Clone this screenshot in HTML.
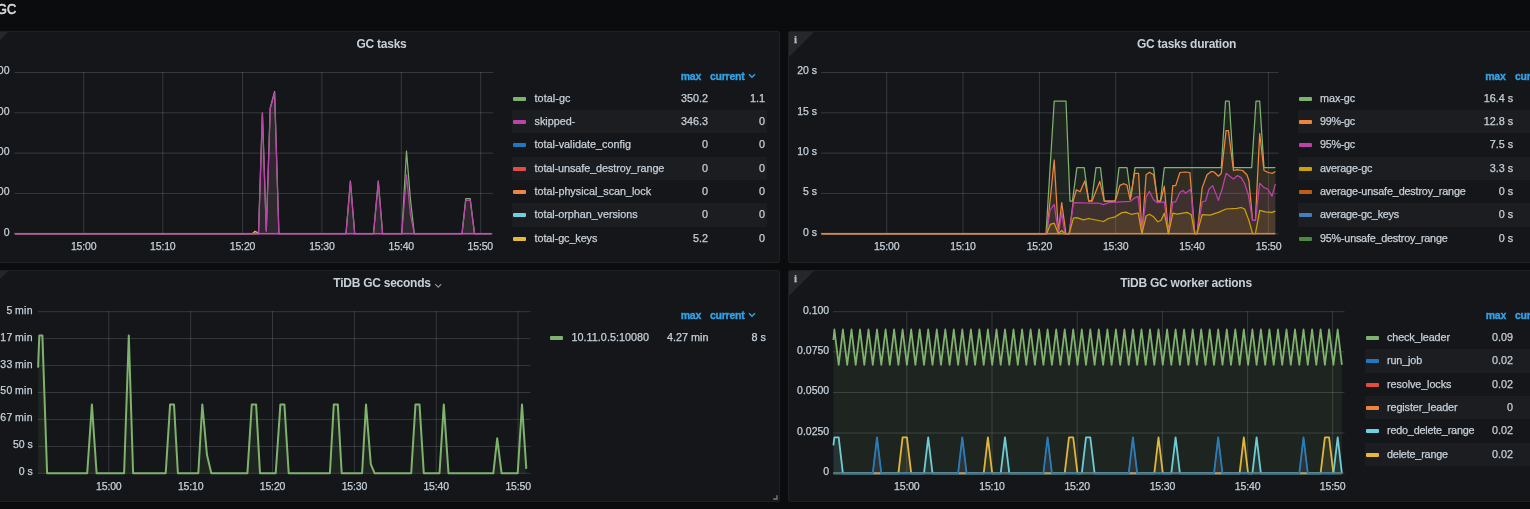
<!DOCTYPE html>
<html><head><meta charset="utf-8"><title>GC</title>
<style>
html,body{margin:0;padding:0;background:#0b0c0e;}
body{-webkit-text-stroke:0.25px;width:1530px;height:509px;overflow:hidden;position:relative;font-family:"Liberation Sans",sans-serif;color:#c7d0d9;font-size:10.5px;}
#root{position:absolute;left:0;top:0;width:1530px;height:509px;will-change:transform;}
.panel{position:absolute;background:#141619;border:1px solid #1e2024;box-sizing:border-box;border-radius:2px;}
.title{-webkit-text-stroke:0;position:absolute;font-size:12px;font-weight:bold;color:#c7d0d9;white-space:nowrap;transform:translateX(-50%);letter-spacing:-0.25px}
.row{position:absolute;left:-2.6px;top:1.2px;font-size:14.3px;line-height:17px;font-weight:normal;-webkit-text-stroke:0.6px;color:#d8d9da;transform:scaleX(0.89);transform-origin:0 0;}
svg.ch{position:absolute;left:0;top:0}
.xl{position:absolute;width:60px;text-align:center;font-size:10.5px;line-height:14px;color:#c7d0d9;letter-spacing:-0.15px}
.yl{position:absolute;width:80px;text-align:right;font-size:10.5px;line-height:14px;color:#c7d0d9;white-space:nowrap;}
.lr{position:absolute;box-sizing:border-box;white-space:nowrap;font-size:10.8px;line-height:23px;}
.lr i{position:absolute;left:1px;top:10px;width:13px;height:4px;border-radius:1px}
.lr .ln{position:absolute;left:22.5px;top:0}
.lr .lv{position:absolute;top:0}
.lh{position:absolute;font-size:10.5px;font-weight:bold;color:#33a2e5;white-space:nowrap;line-height:14px;letter-spacing:-0.25px;-webkit-text-stroke:0.35px;margin-top:-0.7px}
.corner{position:absolute;width:0;height:0;border-top:25px solid #25272b;border-right:25px solid transparent;}
.ci{position:absolute;font-family:"Liberation Serif",serif;font-weight:bold;font-size:11px;color:#b4bbc3;line-height:10px}
</style></head><body>
<div id="root"><div class="row">GC</div>
<div class="panel" style="left:-17px;top:31px;width:797px;height:232px"></div>
<div class="panel" style="left:788px;top:31px;width:797px;height:232px"></div>
<div class="panel" style="left:-17px;top:270px;width:797px;height:232px"></div>
<div class="panel" style="left:788px;top:270px;width:797px;height:232px"></div>
<div class="corner" style="left:-17px;top:32px"></div>
<div class="corner" style="left:789px;top:32px"></div><div class="ci" style="left:794px;top:34px">i</div>
<div class="corner" style="left:-17px;top:271px"></div>
<div class="corner" style="left:789px;top:271px"></div><div class="ci" style="left:794px;top:273px">i</div>
<div class="title" style="left:381.5px;top:36.6px">GC tasks</div>
<div class="title" style="left:1186.5px;top:36.6px">GC tasks duration</div>
<div class="title" style="left:388px;top:276px">TiDB GC seconds <svg width="8" height="6" viewBox="0 0 8 6" style="vertical-align:-1.5px;margin-left:1px"><path d="M1 1.2 L4 4.2 L7 1.2" fill="none" stroke="#8e959d" stroke-width="1.2"/></svg></div>
<div class="title" style="left:1186px;top:276px">TiDB GC worker actions</div>
<svg class="ch" width="1530" height="509" viewBox="0 0 1530 509">
<rect x="14.5" y="72.00" width="478.5" height="1" fill="rgba(199,208,217,0.19)"/><rect x="14.5" y="112.30" width="478.5" height="1" fill="rgba(199,208,217,0.19)"/><rect x="14.5" y="152.60" width="478.5" height="1" fill="rgba(199,208,217,0.19)"/><rect x="14.5" y="192.90" width="478.5" height="1" fill="rgba(199,208,217,0.19)"/><rect x="14.5" y="233.20" width="478.5" height="1" fill="rgba(199,208,217,0.19)"/><rect x="83.20" y="72" width="1" height="162.2" fill="rgba(199,208,217,0.19)"/><rect x="162.30" y="72" width="1" height="162.2" fill="rgba(199,208,217,0.19)"/><rect x="242.00" y="72" width="1" height="162.2" fill="rgba(199,208,217,0.19)"/><rect x="321.40" y="72" width="1" height="162.2" fill="rgba(199,208,217,0.19)"/><rect x="400.80" y="72" width="1" height="162.2" fill="rgba(199,208,217,0.19)"/><rect x="480.20" y="72" width="1" height="162.2" fill="rgba(199,208,217,0.19)"/><polygon points="15.0,233.7 15.0,233.7 252.5,233.7 255.0,231.2 257.5,232.6 259.0,233.7 259.0,233.7" fill="#EAB839" fill-opacity="0.1"/><polyline points="15.0,233.7 252.5,233.7 255.0,231.2 257.5,232.6 259.0,233.7" fill="none" stroke="#EAB839" stroke-width="1.25" stroke-linejoin="round"/><polygon points="15.0,233.7 15.0,233.7 258.5,233.7 262.4,113.0 266.3,231.0 270.2,108.0 274.6,91.5 278.9,233.7 346.0,233.7 350.4,181.0 354.7,233.7 373.5,233.7 378.3,181.0 382.6,233.7 401.8,233.7 406.5,151.0 410.5,200.0 414.3,233.7 462.0,233.7 465.8,198.6 470.2,198.6 474.5,233.7 491.5,233.7 491.5,233.7" fill="#7EB26D" fill-opacity="0.1"/><polyline points="15.0,233.7 258.5,233.7 262.4,113.0 266.3,231.0 270.2,108.0 274.6,91.5 278.9,233.7 346.0,233.7 350.4,181.0 354.7,233.7 373.5,233.7 378.3,181.0 382.6,233.7 401.8,233.7 406.5,151.0 410.5,200.0 414.3,233.7 462.0,233.7 465.8,198.6 470.2,198.6 474.5,233.7 491.5,233.7" fill="none" stroke="#7EB26D" stroke-width="1.25" stroke-linejoin="round"/><polygon points="15.0,233.7 15.0,233.7 258.5,233.7 262.4,113.0 266.3,231.0 270.2,109.0 274.6,92.6 278.9,233.7 346.0,233.7 350.4,181.8 354.7,233.7 373.5,233.7 378.3,181.8 382.6,233.7 401.8,233.7 406.5,175.0 410.5,215.0 414.3,233.7 462.0,233.7 465.8,200.3 470.2,200.3 474.5,233.7 491.5,233.7 491.5,233.7" fill="#BA43A9" fill-opacity="0.1"/><polyline points="15.0,233.7 258.5,233.7 262.4,113.0 266.3,231.0 270.2,109.0 274.6,92.6 278.9,233.7 346.0,233.7 350.4,181.8 354.7,233.7 373.5,233.7 378.3,181.8 382.6,233.7 401.8,233.7 406.5,175.0 410.5,215.0 414.3,233.7 462.0,233.7 465.8,200.3 470.2,200.3 474.5,233.7 491.5,233.7" fill="none" stroke="#BA43A9" stroke-width="1.25" stroke-linejoin="round"/><rect x="14.5" y="232.89999999999998" width="477" height="1.6" fill="#bd52ac"/>
<rect x="821" y="72.00" width="457.5" height="1" fill="rgba(199,208,217,0.19)"/><rect x="821" y="112.30" width="457.5" height="1" fill="rgba(199,208,217,0.19)"/><rect x="821" y="152.60" width="457.5" height="1" fill="rgba(199,208,217,0.19)"/><rect x="821" y="192.90" width="457.5" height="1" fill="rgba(199,208,217,0.19)"/><rect x="821" y="233.20" width="457.5" height="1" fill="rgba(199,208,217,0.19)"/><rect x="886.20" y="72" width="1" height="162.2" fill="rgba(199,208,217,0.19)"/><rect x="962.50" y="72" width="1" height="162.2" fill="rgba(199,208,217,0.19)"/><rect x="1038.90" y="72" width="1" height="162.2" fill="rgba(199,208,217,0.19)"/><rect x="1115.20" y="72" width="1" height="162.2" fill="rgba(199,208,217,0.19)"/><rect x="1191.50" y="72" width="1" height="162.2" fill="rgba(199,208,217,0.19)"/><rect x="1267.90" y="72" width="1" height="162.2" fill="rgba(199,208,217,0.19)"/><polygon points="822.0,233.7 822.0,233.7 1046.0,233.7 1054.2,101.2 1066.0,101.2 1070.0,201.2 1072.4,201.2 1076.9,167.6 1084.2,167.6 1088.7,201.2 1091.6,201.2 1096.0,167.6 1100.5,167.6 1104.3,201.2 1115.2,201.2 1119.0,167.6 1127.0,167.6 1130.9,197.2 1135.0,167.6 1153.6,167.6 1157.4,201.2 1160.4,201.2 1164.3,167.6 1221.3,167.6 1225.5,101.2 1229.2,101.2 1233.5,167.6 1251.7,167.6 1256.0,101.2 1259.7,101.2 1264.0,167.6 1275.4,167.6 1275.4,233.7" fill="#7EB26D" fill-opacity="0.1"/><polyline points="822.0,233.7 1046.0,233.7 1054.2,101.2 1066.0,101.2 1070.0,201.2 1072.4,201.2 1076.9,167.6 1084.2,167.6 1088.7,201.2 1091.6,201.2 1096.0,167.6 1100.5,167.6 1104.3,201.2 1115.2,201.2 1119.0,167.6 1127.0,167.6 1130.9,197.2 1135.0,167.6 1153.6,167.6 1157.4,201.2 1160.4,201.2 1164.3,167.6 1221.3,167.6 1225.5,101.2 1229.2,101.2 1233.5,167.6 1251.7,167.6 1256.0,101.2 1259.7,101.2 1264.0,167.6 1275.4,167.6" fill="none" stroke="#7EB26D" stroke-width="1.25" stroke-linejoin="round"/><polygon points="822.0,233.7 822.0,233.7 1046.7,233.7 1054.2,160.0 1058.4,232.0 1061.7,202.6 1065.9,233.7 1069.2,233.7 1073.4,200.0 1076.4,189.8 1080.1,191.8 1084.8,180.9 1088.8,200.9 1092.1,200.9 1099.8,181.4 1104.3,201.0 1115.2,201.0 1119.9,185.4 1123.5,183.7 1126.9,185.0 1130.2,199.8 1134.4,173.4 1138.6,173.4 1141.9,233.7 1146.1,174.7 1149.4,172.2 1153.6,174.7 1157.8,201.0 1160.6,201.0 1164.3,186.2 1168.5,233.7 1172.8,185.6 1175.7,185.6 1179.9,172.5 1185.6,172.0 1189.9,172.5 1194.8,233.7 1197.0,233.7 1202.2,187.6 1207.0,174.8 1211.3,171.4 1214.1,172.0 1218.4,176.2 1221.3,173.3 1226.1,130.6 1228.4,130.6 1233.5,170.5 1236.9,169.6 1242.6,170.5 1246.9,174.8 1248.9,180.5 1252.6,220.4 1255.4,220.4 1259.7,133.5 1264.0,170.5 1268.3,172.5 1272.5,173.3 1275.4,171.4 1275.4,233.7" fill="#EF843C" fill-opacity="0.1"/><polyline points="822.0,233.7 1046.7,233.7 1054.2,160.0 1058.4,232.0 1061.7,202.6 1065.9,233.7 1069.2,233.7 1073.4,200.0 1076.4,189.8 1080.1,191.8 1084.8,180.9 1088.8,200.9 1092.1,200.9 1099.8,181.4 1104.3,201.0 1115.2,201.0 1119.9,185.4 1123.5,183.7 1126.9,185.0 1130.2,199.8 1134.4,173.4 1138.6,173.4 1141.9,233.7 1146.1,174.7 1149.4,172.2 1153.6,174.7 1157.8,201.0 1160.6,201.0 1164.3,186.2 1168.5,233.7 1172.8,185.6 1175.7,185.6 1179.9,172.5 1185.6,172.0 1189.9,172.5 1194.8,233.7 1197.0,233.7 1202.2,187.6 1207.0,174.8 1211.3,171.4 1214.1,172.0 1218.4,176.2 1221.3,173.3 1226.1,130.6 1228.4,130.6 1233.5,170.5 1236.9,169.6 1242.6,170.5 1246.9,174.8 1248.9,180.5 1252.6,220.4 1255.4,220.4 1259.7,133.5 1264.0,170.5 1268.3,172.5 1272.5,173.3 1275.4,171.4" fill="none" stroke="#EF843C" stroke-width="1.25" stroke-linejoin="round"/><polygon points="822.0,233.7 822.0,233.7 1046.7,233.7 1050.0,210.1 1054.2,204.3 1058.4,233.7 1061.7,212.6 1065.0,233.7 1069.2,233.7 1073.4,202.6 1088.5,203.0 1098.5,203.0 1103.5,204.6 1108.5,202.6 1120.2,201.8 1130.2,201.4 1134.4,198.1 1138.2,196.4 1141.9,233.7 1146.1,196.8 1149.4,191.4 1153.6,199.8 1157.0,202.6 1164.3,201.8 1168.5,233.7 1172.8,201.8 1175.7,201.8 1179.9,192.4 1182.8,190.4 1185.6,193.3 1189.9,189.6 1191.3,193.3 1194.8,233.7 1197.0,233.7 1202.2,201.8 1205.6,201.0 1209.0,189.0 1212.7,185.6 1218.4,200.4 1222.1,189.0 1226.1,173.3 1229.8,176.2 1233.5,179.0 1237.5,175.6 1241.2,177.6 1244.6,183.3 1248.3,194.7 1252.6,220.4 1255.4,220.4 1259.7,183.3 1264.0,187.6 1267.7,189.0 1272.0,196.1 1275.4,183.9 1275.4,233.7" fill="#BA43A9" fill-opacity="0.1"/><polyline points="822.0,233.7 1046.7,233.7 1050.0,210.1 1054.2,204.3 1058.4,233.7 1061.7,212.6 1065.0,233.7 1069.2,233.7 1073.4,202.6 1088.5,203.0 1098.5,203.0 1103.5,204.6 1108.5,202.6 1120.2,201.8 1130.2,201.4 1134.4,198.1 1138.2,196.4 1141.9,233.7 1146.1,196.8 1149.4,191.4 1153.6,199.8 1157.0,202.6 1164.3,201.8 1168.5,233.7 1172.8,201.8 1175.7,201.8 1179.9,192.4 1182.8,190.4 1185.6,193.3 1189.9,189.6 1191.3,193.3 1194.8,233.7 1197.0,233.7 1202.2,201.8 1205.6,201.0 1209.0,189.0 1212.7,185.6 1218.4,200.4 1222.1,189.0 1226.1,173.3 1229.8,176.2 1233.5,179.0 1237.5,175.6 1241.2,177.6 1244.6,183.3 1248.3,194.7 1252.6,220.4 1255.4,220.4 1259.7,183.3 1264.0,187.6 1267.7,189.0 1272.0,196.1 1275.4,183.9" fill="none" stroke="#BA43A9" stroke-width="1.25" stroke-linejoin="round"/><polygon points="822.0,233.7 822.0,233.7 1046.7,233.7 1050.4,224.3 1054.2,223.2 1058.4,233.7 1061.7,230.5 1065.0,233.7 1069.2,233.7 1073.4,218.2 1076.8,217.7 1083.4,219.8 1088.5,218.5 1103.5,221.5 1108.5,218.5 1115.2,216.8 1121.9,212.6 1126.0,212.1 1131.0,214.3 1138.2,213.0 1141.9,233.7 1146.1,216.0 1149.4,214.3 1153.6,216.8 1157.8,221.8 1161.1,220.2 1164.3,213.2 1168.5,233.7 1172.8,213.2 1177.1,214.1 1187.1,212.4 1191.3,214.7 1194.8,233.7 1197.0,233.7 1202.2,214.7 1209.9,215.2 1218.4,212.4 1226.1,209.0 1236.9,208.4 1241.2,207.5 1244.6,209.0 1248.9,220.4 1252.6,233.7 1255.4,233.7 1259.7,210.4 1265.4,211.8 1272.0,212.4 1275.4,211.2 1275.4,233.7" fill="#CCA300" fill-opacity="0.1"/><polyline points="822.0,233.7 1046.7,233.7 1050.4,224.3 1054.2,223.2 1058.4,233.7 1061.7,230.5 1065.0,233.7 1069.2,233.7 1073.4,218.2 1076.8,217.7 1083.4,219.8 1088.5,218.5 1103.5,221.5 1108.5,218.5 1115.2,216.8 1121.9,212.6 1126.0,212.1 1131.0,214.3 1138.2,213.0 1141.9,233.7 1146.1,216.0 1149.4,214.3 1153.6,216.8 1157.8,221.8 1161.1,220.2 1164.3,213.2 1168.5,233.7 1172.8,213.2 1177.1,214.1 1187.1,212.4 1191.3,214.7 1194.8,233.7 1197.0,233.7 1202.2,214.7 1209.9,215.2 1218.4,212.4 1226.1,209.0 1236.9,208.4 1241.2,207.5 1244.6,209.0 1248.9,220.4 1252.6,233.7 1255.4,233.7 1259.7,210.4 1265.4,211.8 1272.0,212.4 1275.4,211.2" fill="none" stroke="#CCA300" stroke-width="1.25" stroke-linejoin="round"/><rect x="821" y="232.89999999999998" width="454.4" height="1.6" fill="#c88a55"/>
<rect x="38" y="311.20" width="492.29999999999995" height="1" fill="rgba(199,208,217,0.19)"/><rect x="38" y="338.10" width="492.29999999999995" height="1" fill="rgba(199,208,217,0.19)"/><rect x="38" y="365.10" width="492.29999999999995" height="1" fill="rgba(199,208,217,0.19)"/><rect x="38" y="392.00" width="492.29999999999995" height="1" fill="rgba(199,208,217,0.19)"/><rect x="38" y="418.90" width="492.29999999999995" height="1" fill="rgba(199,208,217,0.19)"/><rect x="38" y="445.90" width="492.29999999999995" height="1" fill="rgba(199,208,217,0.19)"/><rect x="38" y="472.80" width="492.29999999999995" height="1" fill="rgba(199,208,217,0.19)"/><rect x="108.30" y="311.2" width="1" height="162.60000000000002" fill="rgba(199,208,217,0.19)"/><rect x="190.15" y="311.2" width="1" height="162.60000000000002" fill="rgba(199,208,217,0.19)"/><rect x="272.00" y="311.2" width="1" height="162.60000000000002" fill="rgba(199,208,217,0.19)"/><rect x="353.85" y="311.2" width="1" height="162.60000000000002" fill="rgba(199,208,217,0.19)"/><rect x="435.70" y="311.2" width="1" height="162.60000000000002" fill="rgba(199,208,217,0.19)"/><rect x="517.55" y="311.2" width="1" height="162.60000000000002" fill="rgba(199,208,217,0.19)"/><polygon points="38.1,473.3 38.1,367.6 39.3,335.5 42.4,335.5 47.1,473.3 87.2,473.3 91.9,404.4 96.6,473.3 124.1,473.3 128.8,335.5 133.1,473.3 165.7,473.3 170.1,404.4 174.0,404.4 177.9,473.3 198.3,473.3 202.3,404.4 207.0,455.1 211.3,473.3 247.4,473.3 251.8,404.4 256.1,404.4 260.0,473.3 275.7,473.3 280.4,404.4 284.4,404.4 288.7,473.3 329.9,473.3 333.8,404.4 337.8,404.4 341.7,473.3 362.1,473.3 366.0,404.4 370.8,464.2 374.7,473.3 411.2,473.3 415.5,404.4 419.5,404.4 423.8,473.3 439.5,473.3 443.8,404.4 448.5,473.3 493.3,473.3 497.2,438.3 501.6,473.3 517.7,473.3 522.0,404.4 526.3,468.9 526.3,473.3" fill="#7EB26D" fill-opacity="0.1"/><polyline points="38.1,367.6 39.3,335.5 42.4,335.5 47.1,473.3 87.2,473.3 91.9,404.4 96.6,473.3 124.1,473.3 128.8,335.5 133.1,473.3 165.7,473.3 170.1,404.4 174.0,404.4 177.9,473.3 198.3,473.3 202.3,404.4 207.0,455.1 211.3,473.3 247.4,473.3 251.8,404.4 256.1,404.4 260.0,473.3 275.7,473.3 280.4,404.4 284.4,404.4 288.7,473.3 329.9,473.3 333.8,404.4 337.8,404.4 341.7,473.3 362.1,473.3 366.0,404.4 370.8,464.2 374.7,473.3 411.2,473.3 415.5,404.4 419.5,404.4 423.8,473.3 439.5,473.3 443.8,404.4 448.5,473.3 493.3,473.3 497.2,438.3 501.6,473.3 517.7,473.3 522.0,404.4 526.3,468.9" fill="none" stroke="#7EB26D" stroke-width="2" stroke-linejoin="round"/>
<rect x="833" y="311.20" width="511.5" height="1" fill="rgba(199,208,217,0.19)"/><rect x="833" y="351.30" width="511.5" height="1" fill="rgba(199,208,217,0.19)"/><rect x="833" y="392.00" width="511.5" height="1" fill="rgba(199,208,217,0.19)"/><rect x="833" y="432.50" width="511.5" height="1" fill="rgba(199,208,217,0.19)"/><rect x="833" y="472.80" width="511.5" height="1" fill="rgba(199,208,217,0.19)"/><rect x="906.30" y="311.2" width="1" height="162.60000000000002" fill="rgba(199,208,217,0.19)"/><rect x="991.50" y="311.2" width="1" height="162.60000000000002" fill="rgba(199,208,217,0.19)"/><rect x="1076.70" y="311.2" width="1" height="162.60000000000002" fill="rgba(199,208,217,0.19)"/><rect x="1161.90" y="311.2" width="1" height="162.60000000000002" fill="rgba(199,208,217,0.19)"/><rect x="1247.10" y="311.2" width="1" height="162.60000000000002" fill="rgba(199,208,217,0.19)"/><rect x="1332.10" y="311.2" width="1" height="162.60000000000002" fill="rgba(199,208,217,0.19)"/><polygon points="833.4,473.3 833.4,473.3 834.4,473.3 838.7,473.3 842.9,473.3 847.2,473.3 851.5,473.3 855.7,473.3 860.0,473.3 864.3,473.3 868.5,473.3 872.8,473.3 877.0,473.3 881.3,473.3 885.6,473.3 889.8,473.3 894.1,473.3 898.4,473.3 902.6,437.3 906.9,437.3 911.2,473.3 915.4,473.3 919.7,473.3 924.0,473.3 928.2,473.3 932.5,473.3 936.8,473.3 941.0,473.3 945.3,473.3 949.6,473.3 953.8,473.3 958.1,473.3 962.3,473.3 966.6,473.3 970.9,473.3 975.1,473.3 979.4,473.3 983.7,473.3 987.9,437.3 992.2,473.3 996.5,473.3 1000.7,473.3 1005.0,473.3 1009.3,473.3 1013.5,473.3 1017.8,473.3 1022.1,473.3 1026.3,473.3 1030.6,473.3 1034.9,473.3 1039.1,473.3 1043.4,473.3 1047.6,473.3 1051.9,473.3 1056.2,473.3 1060.4,473.3 1064.7,473.3 1069.0,437.3 1073.2,437.3 1077.5,473.3 1081.8,473.3 1086.0,473.3 1090.3,473.3 1094.6,473.3 1098.8,473.3 1103.1,473.3 1107.4,473.3 1111.6,473.3 1115.9,473.3 1120.2,473.3 1124.4,473.3 1128.7,473.3 1132.9,473.3 1137.2,473.3 1141.5,473.3 1145.7,473.3 1150.0,473.3 1154.3,473.3 1158.5,437.3 1162.8,473.3 1167.1,473.3 1171.3,473.3 1175.6,473.3 1179.9,473.3 1184.1,473.3 1188.4,473.3 1192.7,473.3 1196.9,473.3 1201.2,473.3 1205.5,473.3 1209.7,473.3 1214.0,473.3 1218.2,473.3 1222.5,473.3 1226.8,473.3 1231.0,473.3 1235.3,473.3 1239.6,473.3 1243.8,437.3 1248.1,473.3 1252.4,473.3 1256.6,473.3 1260.9,473.3 1265.2,473.3 1269.4,473.3 1273.7,473.3 1278.0,473.3 1282.2,473.3 1286.5,473.3 1290.8,473.3 1295.0,473.3 1299.3,473.3 1303.5,473.3 1307.8,473.3 1312.1,473.3 1316.3,473.3 1320.6,473.3 1324.9,437.3 1329.1,437.3 1333.4,473.3 1337.7,473.3 1341.9,473.3 1341.9,473.3" fill="#EAB839" fill-opacity="0.1"/><polyline points="833.4,473.3 834.4,473.3 838.7,473.3 842.9,473.3 847.2,473.3 851.5,473.3 855.7,473.3 860.0,473.3 864.3,473.3 868.5,473.3 872.8,473.3 877.0,473.3 881.3,473.3 885.6,473.3 889.8,473.3 894.1,473.3 898.4,473.3 902.6,437.3 906.9,437.3 911.2,473.3 915.4,473.3 919.7,473.3 924.0,473.3 928.2,473.3 932.5,473.3 936.8,473.3 941.0,473.3 945.3,473.3 949.6,473.3 953.8,473.3 958.1,473.3 962.3,473.3 966.6,473.3 970.9,473.3 975.1,473.3 979.4,473.3 983.7,473.3 987.9,437.3 992.2,473.3 996.5,473.3 1000.7,473.3 1005.0,473.3 1009.3,473.3 1013.5,473.3 1017.8,473.3 1022.1,473.3 1026.3,473.3 1030.6,473.3 1034.9,473.3 1039.1,473.3 1043.4,473.3 1047.6,473.3 1051.9,473.3 1056.2,473.3 1060.4,473.3 1064.7,473.3 1069.0,437.3 1073.2,437.3 1077.5,473.3 1081.8,473.3 1086.0,473.3 1090.3,473.3 1094.6,473.3 1098.8,473.3 1103.1,473.3 1107.4,473.3 1111.6,473.3 1115.9,473.3 1120.2,473.3 1124.4,473.3 1128.7,473.3 1132.9,473.3 1137.2,473.3 1141.5,473.3 1145.7,473.3 1150.0,473.3 1154.3,473.3 1158.5,437.3 1162.8,473.3 1167.1,473.3 1171.3,473.3 1175.6,473.3 1179.9,473.3 1184.1,473.3 1188.4,473.3 1192.7,473.3 1196.9,473.3 1201.2,473.3 1205.5,473.3 1209.7,473.3 1214.0,473.3 1218.2,473.3 1222.5,473.3 1226.8,473.3 1231.0,473.3 1235.3,473.3 1239.6,473.3 1243.8,437.3 1248.1,473.3 1252.4,473.3 1256.6,473.3 1260.9,473.3 1265.2,473.3 1269.4,473.3 1273.7,473.3 1278.0,473.3 1282.2,473.3 1286.5,473.3 1290.8,473.3 1295.0,473.3 1299.3,473.3 1303.5,473.3 1307.8,473.3 1312.1,473.3 1316.3,473.3 1320.6,473.3 1324.9,437.3 1329.1,437.3 1333.4,473.3 1337.7,473.3 1341.9,473.3" fill="none" stroke="#EAB839" stroke-width="1.8" stroke-linejoin="round"/><polygon points="833.4,473.3 833.4,445.3 834.4,437.3 838.7,437.3 842.9,473.3 847.2,473.3 851.5,473.3 855.7,473.3 860.0,473.3 864.3,473.3 868.5,473.3 872.8,473.3 877.0,473.3 881.3,473.3 885.6,473.3 889.8,473.3 894.1,473.3 898.4,473.3 902.6,473.3 906.9,473.3 911.2,473.3 915.4,473.3 919.7,473.3 924.0,473.3 928.2,437.3 932.5,473.3 936.8,473.3 941.0,473.3 945.3,473.3 949.6,473.3 953.8,473.3 958.1,473.3 962.3,473.3 966.6,473.3 970.9,473.3 975.1,473.3 979.4,473.3 983.7,473.3 987.9,473.3 992.2,473.3 996.5,473.3 1000.7,473.3 1005.0,437.3 1009.3,473.3 1013.5,473.3 1017.8,473.3 1022.1,473.3 1026.3,473.3 1030.6,473.3 1034.9,473.3 1039.1,473.3 1043.4,473.3 1047.6,473.3 1051.9,473.3 1056.2,473.3 1060.4,473.3 1064.7,473.3 1069.0,473.3 1073.2,473.3 1077.5,473.3 1081.8,473.3 1086.0,437.3 1090.3,437.3 1094.6,473.3 1098.8,473.3 1103.1,473.3 1107.4,473.3 1111.6,473.3 1115.9,473.3 1120.2,473.3 1124.4,473.3 1128.7,473.3 1132.9,473.3 1137.2,473.3 1141.5,473.3 1145.7,473.3 1150.0,473.3 1154.3,473.3 1158.5,473.3 1162.8,473.3 1167.1,473.3 1171.3,473.3 1175.6,437.3 1179.9,473.3 1184.1,473.3 1188.4,473.3 1192.7,473.3 1196.9,473.3 1201.2,473.3 1205.5,473.3 1209.7,473.3 1214.0,473.3 1218.2,473.3 1222.5,473.3 1226.8,473.3 1231.0,473.3 1235.3,473.3 1239.6,473.3 1243.8,473.3 1248.1,473.3 1252.4,473.3 1256.6,437.3 1260.9,473.3 1265.2,473.3 1269.4,473.3 1273.7,473.3 1278.0,473.3 1282.2,473.3 1286.5,473.3 1290.8,473.3 1295.0,473.3 1299.3,473.3 1303.5,473.3 1307.8,473.3 1312.1,473.3 1316.3,473.3 1320.6,473.3 1324.9,473.3 1329.1,473.3 1333.4,473.3 1337.7,437.3 1341.9,473.3 1341.9,473.3" fill="#6ED0E0" fill-opacity="0.1"/><polyline points="833.4,445.3 834.4,437.3 838.7,437.3 842.9,473.3 847.2,473.3 851.5,473.3 855.7,473.3 860.0,473.3 864.3,473.3 868.5,473.3 872.8,473.3 877.0,473.3 881.3,473.3 885.6,473.3 889.8,473.3 894.1,473.3 898.4,473.3 902.6,473.3 906.9,473.3 911.2,473.3 915.4,473.3 919.7,473.3 924.0,473.3 928.2,437.3 932.5,473.3 936.8,473.3 941.0,473.3 945.3,473.3 949.6,473.3 953.8,473.3 958.1,473.3 962.3,473.3 966.6,473.3 970.9,473.3 975.1,473.3 979.4,473.3 983.7,473.3 987.9,473.3 992.2,473.3 996.5,473.3 1000.7,473.3 1005.0,437.3 1009.3,473.3 1013.5,473.3 1017.8,473.3 1022.1,473.3 1026.3,473.3 1030.6,473.3 1034.9,473.3 1039.1,473.3 1043.4,473.3 1047.6,473.3 1051.9,473.3 1056.2,473.3 1060.4,473.3 1064.7,473.3 1069.0,473.3 1073.2,473.3 1077.5,473.3 1081.8,473.3 1086.0,437.3 1090.3,437.3 1094.6,473.3 1098.8,473.3 1103.1,473.3 1107.4,473.3 1111.6,473.3 1115.9,473.3 1120.2,473.3 1124.4,473.3 1128.7,473.3 1132.9,473.3 1137.2,473.3 1141.5,473.3 1145.7,473.3 1150.0,473.3 1154.3,473.3 1158.5,473.3 1162.8,473.3 1167.1,473.3 1171.3,473.3 1175.6,437.3 1179.9,473.3 1184.1,473.3 1188.4,473.3 1192.7,473.3 1196.9,473.3 1201.2,473.3 1205.5,473.3 1209.7,473.3 1214.0,473.3 1218.2,473.3 1222.5,473.3 1226.8,473.3 1231.0,473.3 1235.3,473.3 1239.6,473.3 1243.8,473.3 1248.1,473.3 1252.4,473.3 1256.6,437.3 1260.9,473.3 1265.2,473.3 1269.4,473.3 1273.7,473.3 1278.0,473.3 1282.2,473.3 1286.5,473.3 1290.8,473.3 1295.0,473.3 1299.3,473.3 1303.5,473.3 1307.8,473.3 1312.1,473.3 1316.3,473.3 1320.6,473.3 1324.9,473.3 1329.1,473.3 1333.4,473.3 1337.7,437.3 1341.9,473.3" fill="none" stroke="#6ED0E0" stroke-width="1.8" stroke-linejoin="round"/><polygon points="833.4,473.3 833.4,473.3 834.4,473.3 838.7,473.3 842.9,473.3 847.2,473.3 851.5,473.3 855.7,473.3 860.0,473.3 864.3,473.3 868.5,473.3 872.8,473.3 877.0,437.3 881.3,473.3 885.6,473.3 889.8,473.3 894.1,473.3 898.4,473.3 902.6,473.3 906.9,473.3 911.2,473.3 915.4,473.3 919.7,473.3 924.0,473.3 928.2,473.3 932.5,473.3 936.8,473.3 941.0,473.3 945.3,473.3 949.6,473.3 953.8,473.3 958.1,473.3 962.3,437.3 966.6,473.3 970.9,473.3 975.1,473.3 979.4,473.3 983.7,473.3 987.9,473.3 992.2,473.3 996.5,473.3 1000.7,473.3 1005.0,473.3 1009.3,473.3 1013.5,473.3 1017.8,473.3 1022.1,473.3 1026.3,473.3 1030.6,473.3 1034.9,473.3 1039.1,473.3 1043.4,473.3 1047.6,437.3 1051.9,473.3 1056.2,473.3 1060.4,473.3 1064.7,473.3 1069.0,473.3 1073.2,473.3 1077.5,473.3 1081.8,473.3 1086.0,473.3 1090.3,473.3 1094.6,473.3 1098.8,473.3 1103.1,473.3 1107.4,473.3 1111.6,473.3 1115.9,473.3 1120.2,473.3 1124.4,473.3 1128.7,473.3 1132.9,437.3 1137.2,473.3 1141.5,473.3 1145.7,473.3 1150.0,473.3 1154.3,473.3 1158.5,473.3 1162.8,473.3 1167.1,473.3 1171.3,473.3 1175.6,473.3 1179.9,473.3 1184.1,473.3 1188.4,473.3 1192.7,473.3 1196.9,473.3 1201.2,473.3 1205.5,473.3 1209.7,473.3 1214.0,473.3 1218.2,437.3 1222.5,473.3 1226.8,473.3 1231.0,473.3 1235.3,473.3 1239.6,473.3 1243.8,473.3 1248.1,473.3 1252.4,473.3 1256.6,473.3 1260.9,473.3 1265.2,473.3 1269.4,473.3 1273.7,473.3 1278.0,473.3 1282.2,473.3 1286.5,473.3 1290.8,473.3 1295.0,473.3 1299.3,473.3 1303.5,437.3 1307.8,473.3 1312.1,473.3 1316.3,473.3 1320.6,473.3 1324.9,473.3 1329.1,473.3 1333.4,473.3 1337.7,473.3 1341.9,473.3 1341.9,473.3" fill="#E24D42" fill-opacity="0.1"/><polyline points="833.4,473.3 834.4,473.3 838.7,473.3 842.9,473.3 847.2,473.3 851.5,473.3 855.7,473.3 860.0,473.3 864.3,473.3 868.5,473.3 872.8,473.3 877.0,437.3 881.3,473.3 885.6,473.3 889.8,473.3 894.1,473.3 898.4,473.3 902.6,473.3 906.9,473.3 911.2,473.3 915.4,473.3 919.7,473.3 924.0,473.3 928.2,473.3 932.5,473.3 936.8,473.3 941.0,473.3 945.3,473.3 949.6,473.3 953.8,473.3 958.1,473.3 962.3,437.3 966.6,473.3 970.9,473.3 975.1,473.3 979.4,473.3 983.7,473.3 987.9,473.3 992.2,473.3 996.5,473.3 1000.7,473.3 1005.0,473.3 1009.3,473.3 1013.5,473.3 1017.8,473.3 1022.1,473.3 1026.3,473.3 1030.6,473.3 1034.9,473.3 1039.1,473.3 1043.4,473.3 1047.6,437.3 1051.9,473.3 1056.2,473.3 1060.4,473.3 1064.7,473.3 1069.0,473.3 1073.2,473.3 1077.5,473.3 1081.8,473.3 1086.0,473.3 1090.3,473.3 1094.6,473.3 1098.8,473.3 1103.1,473.3 1107.4,473.3 1111.6,473.3 1115.9,473.3 1120.2,473.3 1124.4,473.3 1128.7,473.3 1132.9,437.3 1137.2,473.3 1141.5,473.3 1145.7,473.3 1150.0,473.3 1154.3,473.3 1158.5,473.3 1162.8,473.3 1167.1,473.3 1171.3,473.3 1175.6,473.3 1179.9,473.3 1184.1,473.3 1188.4,473.3 1192.7,473.3 1196.9,473.3 1201.2,473.3 1205.5,473.3 1209.7,473.3 1214.0,473.3 1218.2,437.3 1222.5,473.3 1226.8,473.3 1231.0,473.3 1235.3,473.3 1239.6,473.3 1243.8,473.3 1248.1,473.3 1252.4,473.3 1256.6,473.3 1260.9,473.3 1265.2,473.3 1269.4,473.3 1273.7,473.3 1278.0,473.3 1282.2,473.3 1286.5,473.3 1290.8,473.3 1295.0,473.3 1299.3,473.3 1303.5,437.3 1307.8,473.3 1312.1,473.3 1316.3,473.3 1320.6,473.3 1324.9,473.3 1329.1,473.3 1333.4,473.3 1337.7,473.3 1341.9,473.3" fill="none" stroke="#E24D42" stroke-width="0.8" stroke-linejoin="round"/><rect x="874.4" y="472.5" width="5.2" height="1.6" fill="#EF843C"/><rect x="959.7" y="472.5" width="5.2" height="1.6" fill="#EF843C"/><rect x="1045.0" y="472.5" width="5.2" height="1.6" fill="#EF843C"/><rect x="1130.3" y="472.5" width="5.2" height="1.6" fill="#EF843C"/><rect x="1215.7" y="472.5" width="5.2" height="1.6" fill="#EF843C"/><rect x="1301.0" y="472.5" width="5.2" height="1.6" fill="#EF843C"/><polygon points="833.4,473.3 833.4,473.3 834.4,473.3 838.7,473.3 842.9,473.3 847.2,473.3 851.5,473.3 855.7,473.3 860.0,473.3 864.3,473.3 868.5,473.3 872.8,473.3 877.0,437.3 881.3,473.3 885.6,473.3 889.8,473.3 894.1,473.3 898.4,473.3 902.6,473.3 906.9,473.3 911.2,473.3 915.4,473.3 919.7,473.3 924.0,473.3 928.2,473.3 932.5,473.3 936.8,473.3 941.0,473.3 945.3,473.3 949.6,473.3 953.8,473.3 958.1,473.3 962.3,437.3 966.6,473.3 970.9,473.3 975.1,473.3 979.4,473.3 983.7,473.3 987.9,473.3 992.2,473.3 996.5,473.3 1000.7,473.3 1005.0,473.3 1009.3,473.3 1013.5,473.3 1017.8,473.3 1022.1,473.3 1026.3,473.3 1030.6,473.3 1034.9,473.3 1039.1,473.3 1043.4,473.3 1047.6,437.3 1051.9,473.3 1056.2,473.3 1060.4,473.3 1064.7,473.3 1069.0,473.3 1073.2,473.3 1077.5,473.3 1081.8,473.3 1086.0,473.3 1090.3,473.3 1094.6,473.3 1098.8,473.3 1103.1,473.3 1107.4,473.3 1111.6,473.3 1115.9,473.3 1120.2,473.3 1124.4,473.3 1128.7,473.3 1132.9,437.3 1137.2,473.3 1141.5,473.3 1145.7,473.3 1150.0,473.3 1154.3,473.3 1158.5,473.3 1162.8,473.3 1167.1,473.3 1171.3,473.3 1175.6,473.3 1179.9,473.3 1184.1,473.3 1188.4,473.3 1192.7,473.3 1196.9,473.3 1201.2,473.3 1205.5,473.3 1209.7,473.3 1214.0,473.3 1218.2,437.3 1222.5,473.3 1226.8,473.3 1231.0,473.3 1235.3,473.3 1239.6,473.3 1243.8,473.3 1248.1,473.3 1252.4,473.3 1256.6,473.3 1260.9,473.3 1265.2,473.3 1269.4,473.3 1273.7,473.3 1278.0,473.3 1282.2,473.3 1286.5,473.3 1290.8,473.3 1295.0,473.3 1299.3,473.3 1303.5,437.3 1307.8,473.3 1312.1,473.3 1316.3,473.3 1320.6,473.3 1324.9,473.3 1329.1,473.3 1333.4,473.3 1337.7,473.3 1341.9,473.3 1341.9,473.3" fill="#1F78C1" fill-opacity="0.1"/><polyline points="833.4,473.3 834.4,473.3 838.7,473.3 842.9,473.3 847.2,473.3 851.5,473.3 855.7,473.3 860.0,473.3 864.3,473.3 868.5,473.3 872.8,473.3 877.0,437.3 881.3,473.3 885.6,473.3 889.8,473.3 894.1,473.3 898.4,473.3 902.6,473.3 906.9,473.3 911.2,473.3 915.4,473.3 919.7,473.3 924.0,473.3 928.2,473.3 932.5,473.3 936.8,473.3 941.0,473.3 945.3,473.3 949.6,473.3 953.8,473.3 958.1,473.3 962.3,437.3 966.6,473.3 970.9,473.3 975.1,473.3 979.4,473.3 983.7,473.3 987.9,473.3 992.2,473.3 996.5,473.3 1000.7,473.3 1005.0,473.3 1009.3,473.3 1013.5,473.3 1017.8,473.3 1022.1,473.3 1026.3,473.3 1030.6,473.3 1034.9,473.3 1039.1,473.3 1043.4,473.3 1047.6,437.3 1051.9,473.3 1056.2,473.3 1060.4,473.3 1064.7,473.3 1069.0,473.3 1073.2,473.3 1077.5,473.3 1081.8,473.3 1086.0,473.3 1090.3,473.3 1094.6,473.3 1098.8,473.3 1103.1,473.3 1107.4,473.3 1111.6,473.3 1115.9,473.3 1120.2,473.3 1124.4,473.3 1128.7,473.3 1132.9,437.3 1137.2,473.3 1141.5,473.3 1145.7,473.3 1150.0,473.3 1154.3,473.3 1158.5,473.3 1162.8,473.3 1167.1,473.3 1171.3,473.3 1175.6,473.3 1179.9,473.3 1184.1,473.3 1188.4,473.3 1192.7,473.3 1196.9,473.3 1201.2,473.3 1205.5,473.3 1209.7,473.3 1214.0,473.3 1218.2,437.3 1222.5,473.3 1226.8,473.3 1231.0,473.3 1235.3,473.3 1239.6,473.3 1243.8,473.3 1248.1,473.3 1252.4,473.3 1256.6,473.3 1260.9,473.3 1265.2,473.3 1269.4,473.3 1273.7,473.3 1278.0,473.3 1282.2,473.3 1286.5,473.3 1290.8,473.3 1295.0,473.3 1299.3,473.3 1303.5,437.3 1307.8,473.3 1312.1,473.3 1316.3,473.3 1320.6,473.3 1324.9,473.3 1329.1,473.3 1333.4,473.3 1337.7,473.3 1341.9,473.3" fill="none" stroke="#1F78C1" stroke-width="1.8" stroke-linejoin="round"/><polygon points="833.4,473.3 833.4,340.0 834.4,329.5 838.7,364.8 842.9,329.5 847.2,364.8 851.5,329.5 855.7,364.8 860.0,329.5 864.3,364.8 868.5,329.5 872.8,364.8 877.0,329.5 881.3,364.8 885.6,329.5 889.8,364.8 894.1,329.5 898.4,364.8 902.6,329.5 906.9,364.8 911.2,329.5 915.4,364.8 919.7,329.5 924.0,364.8 928.2,329.5 932.5,364.8 936.8,329.5 941.0,364.8 945.3,329.5 949.6,364.8 953.8,329.5 958.1,364.8 962.3,329.5 966.6,364.8 970.9,329.5 975.1,364.8 979.4,329.5 983.7,364.8 987.9,329.5 992.2,364.8 996.5,329.5 1000.7,364.8 1005.0,329.5 1009.3,364.8 1013.5,329.5 1017.8,364.8 1022.1,329.5 1026.3,364.8 1030.6,329.5 1034.9,364.8 1039.1,329.5 1043.4,364.8 1047.6,329.5 1051.9,364.8 1056.2,329.5 1060.4,364.8 1064.7,329.5 1069.0,364.8 1073.2,329.5 1077.5,364.8 1081.8,329.5 1086.0,364.8 1090.3,329.5 1094.6,364.8 1098.8,329.5 1103.1,364.8 1107.4,329.5 1111.6,364.8 1115.9,329.5 1120.2,364.8 1124.4,329.5 1128.7,364.8 1132.9,329.5 1137.2,364.8 1141.5,329.5 1145.7,364.8 1150.0,329.5 1154.3,364.8 1158.5,329.5 1162.8,364.8 1167.1,329.5 1171.3,364.8 1175.6,329.5 1179.9,364.8 1184.1,329.5 1188.4,364.8 1192.7,329.5 1196.9,364.8 1201.2,329.5 1205.5,364.8 1209.7,329.5 1214.0,364.8 1218.2,329.5 1222.5,364.8 1226.8,329.5 1231.0,364.8 1235.3,329.5 1239.6,364.8 1243.8,329.5 1248.1,364.8 1252.4,329.5 1256.6,364.8 1260.9,329.5 1265.2,364.8 1269.4,329.5 1273.7,364.8 1278.0,329.5 1282.2,364.8 1286.5,329.5 1290.8,364.8 1295.0,329.5 1299.3,364.8 1303.5,329.5 1307.8,364.8 1312.1,329.5 1316.3,364.8 1320.6,329.5 1324.9,364.8 1329.1,329.5 1333.4,364.8 1337.7,329.5 1341.9,364.8 1341.9,473.3" fill="#7EB26D" fill-opacity="0.1"/><polyline points="833.4,340.0 834.4,329.5 838.7,364.8 842.9,329.5 847.2,364.8 851.5,329.5 855.7,364.8 860.0,329.5 864.3,364.8 868.5,329.5 872.8,364.8 877.0,329.5 881.3,364.8 885.6,329.5 889.8,364.8 894.1,329.5 898.4,364.8 902.6,329.5 906.9,364.8 911.2,329.5 915.4,364.8 919.7,329.5 924.0,364.8 928.2,329.5 932.5,364.8 936.8,329.5 941.0,364.8 945.3,329.5 949.6,364.8 953.8,329.5 958.1,364.8 962.3,329.5 966.6,364.8 970.9,329.5 975.1,364.8 979.4,329.5 983.7,364.8 987.9,329.5 992.2,364.8 996.5,329.5 1000.7,364.8 1005.0,329.5 1009.3,364.8 1013.5,329.5 1017.8,364.8 1022.1,329.5 1026.3,364.8 1030.6,329.5 1034.9,364.8 1039.1,329.5 1043.4,364.8 1047.6,329.5 1051.9,364.8 1056.2,329.5 1060.4,364.8 1064.7,329.5 1069.0,364.8 1073.2,329.5 1077.5,364.8 1081.8,329.5 1086.0,364.8 1090.3,329.5 1094.6,364.8 1098.8,329.5 1103.1,364.8 1107.4,329.5 1111.6,364.8 1115.9,329.5 1120.2,364.8 1124.4,329.5 1128.7,364.8 1132.9,329.5 1137.2,364.8 1141.5,329.5 1145.7,364.8 1150.0,329.5 1154.3,364.8 1158.5,329.5 1162.8,364.8 1167.1,329.5 1171.3,364.8 1175.6,329.5 1179.9,364.8 1184.1,329.5 1188.4,364.8 1192.7,329.5 1196.9,364.8 1201.2,329.5 1205.5,364.8 1209.7,329.5 1214.0,364.8 1218.2,329.5 1222.5,364.8 1226.8,329.5 1231.0,364.8 1235.3,329.5 1239.6,364.8 1243.8,329.5 1248.1,364.8 1252.4,329.5 1256.6,364.8 1260.9,329.5 1265.2,364.8 1269.4,329.5 1273.7,364.8 1278.0,329.5 1282.2,364.8 1286.5,329.5 1290.8,364.8 1295.0,329.5 1299.3,364.8 1303.5,329.5 1307.8,364.8 1312.1,329.5 1316.3,364.8 1320.6,329.5 1324.9,364.8 1329.1,329.5 1333.4,364.8 1337.7,329.5 1341.9,364.8" fill="none" stroke="#7EB26D" stroke-width="1.8" stroke-linejoin="round"/>
</svg>
<div class="xl" style="left:53.7px;top:239.3px">15:00</div><div class="xl" style="left:132.8px;top:239.3px">15:10</div><div class="xl" style="left:212.5px;top:239.3px">15:20</div><div class="xl" style="left:291.9px;top:239.3px">15:30</div><div class="xl" style="left:371.3px;top:239.3px">15:40</div><div class="xl" style="left:450.3px;top:239.3px">15:50</div>
<div class="yl" style="left:-70.5px;top:63.4px">400</div><div class="yl" style="left:-70.5px;top:103.7px">300</div><div class="yl" style="left:-70.5px;top:144.0px">200</div><div class="yl" style="left:-70.5px;top:184.3px">100</div><div class="yl" style="left:-70.5px;top:224.6px">0</div>
<div class="xl" style="left:856.7px;top:239.3px">15:00</div><div class="xl" style="left:933.0px;top:239.3px">15:10</div><div class="xl" style="left:1009.4px;top:239.3px">15:20</div><div class="xl" style="left:1085.7px;top:239.3px">15:30</div><div class="xl" style="left:1162.0px;top:239.3px">15:40</div><div class="xl" style="left:1238.6px;top:239.3px">15:50</div>
<div class="yl" style="left:737px;top:63.4px">20 s</div><div class="yl" style="left:737px;top:103.7px">15 s</div><div class="yl" style="left:737px;top:144.0px">10 s</div><div class="yl" style="left:737px;top:184.3px">5 s</div><div class="yl" style="left:737px;top:224.6px">0 s</div>
<div class="xl" style="left:78.8px;top:479.3px">15:00</div><div class="xl" style="left:160.7px;top:479.3px">15:10</div><div class="xl" style="left:242.5px;top:479.3px">15:20</div><div class="xl" style="left:324.4px;top:479.3px">15:30</div><div class="xl" style="left:406.2px;top:479.3px">15:40</div><div class="xl" style="left:488.2px;top:479.3px">15:50</div>
<div class="yl" style="letter-spacing:0.33px;word-spacing:-0.9px;left:-47.2px;top:302.6px">5 min</div><div class="yl" style="letter-spacing:0.33px;word-spacing:-0.9px;left:-47.2px;top:329.5px">4.17 min</div><div class="yl" style="letter-spacing:0.33px;word-spacing:-0.9px;left:-47.2px;top:356.5px">3.33 min</div><div class="yl" style="letter-spacing:0.33px;word-spacing:-0.9px;left:-47.2px;top:383.4px">2.50 min</div><div class="yl" style="letter-spacing:0.33px;word-spacing:-0.9px;left:-47.2px;top:410.3px">1.67 min</div><div class="yl" style="left:-47.2px;top:437.3px">50 s</div><div class="yl" style="left:-47.2px;top:464.2px">0 s</div>
<div class="xl" style="left:876.8px;top:479.3px">15:00</div><div class="xl" style="left:962.0px;top:479.3px">15:10</div><div class="xl" style="left:1047.2px;top:479.3px">15:20</div><div class="xl" style="left:1132.4px;top:479.3px">15:30</div><div class="xl" style="left:1217.6px;top:479.3px">15:40</div><div class="xl" style="left:1302.6px;top:479.3px">15:50</div>
<div class="yl" style="left:749.2px;top:302.6px">0.100</div><div class="yl" style="left:749.2px;top:342.7px">0.0750</div><div class="yl" style="left:749.2px;top:383.4px">0.0500</div><div class="yl" style="left:749.2px;top:423.9px">0.0250</div><div class="yl" style="left:749.2px;top:464.2px">0</div>
<div class="lh" style="left:661px;top:70px;width:40px;text-align:right">max</div><div class="lh" style="left:710px;top:70px">current<svg width="8" height="6" viewBox="0 0 8 6" style="margin-left:4px;vertical-align:1px"><path d="M1 1.2 L4 4.2 L7 1.2" fill="none" stroke="#33a2e5" stroke-width="1.4"/></svg></div>
<div class="lr" style="left:512px;top:86.7px;width:255px;height:23.33px;"><i style="background:#7EB26D"></i><span class="ln" style="letter-spacing:0.087px;">total-gc</span><span class="lv" style="right:59.0px">350.2</span><span class="lv" style="right:2.0px">1.1</span></div><div class="lr" style="left:512px;top:110.0px;width:255px;height:23.33px;background:#1b1d21;"><i style="background:#BA43A9"></i><span class="ln" style="letter-spacing:-0.014px;">skipped-</span><span class="lv" style="right:59.0px">346.3</span><span class="lv" style="right:2.0px">0</span></div><div class="lr" style="left:512px;top:133.4px;width:255px;height:23.33px;"><i style="background:#1F78C1"></i><span class="ln" style="letter-spacing:0.022px;">total-validate_config</span><span class="lv" style="right:59.0px">0</span><span class="lv" style="right:2.0px">0</span></div><div class="lr" style="left:512px;top:156.7px;width:255px;height:23.33px;background:#1b1d21;"><i style="background:#E24D42"></i><span class="ln" style="letter-spacing:-0.064px;">total-unsafe_destroy_range</span><span class="lv" style="right:59.0px">0</span><span class="lv" style="right:2.0px">0</span></div><div class="lr" style="left:512px;top:180.0px;width:255px;height:23.33px;"><i style="background:#EF843C"></i><span class="ln" style="letter-spacing:-0.018px;">total-physical_scan_lock</span><span class="lv" style="right:59.0px">0</span><span class="lv" style="right:2.0px">0</span></div><div class="lr" style="left:512px;top:203.3px;width:255px;height:23.33px;background:#1b1d21;"><i style="background:#6ED0E0"></i><span class="ln" style="letter-spacing:-0.040px;">total-orphan_versions</span><span class="lv" style="right:59.0px">0</span><span class="lv" style="right:2.0px">0</span></div><div class="lr" style="left:512px;top:226.7px;width:255px;height:23.33px;"><i style="background:#EAB839"></i><span class="ln" style="letter-spacing:-0.063px;">total-gc_keys</span><span class="lv" style="right:59.0px">5.2</span><span class="lv" style="right:2.0px">0</span></div>
<div class="lh" style="left:1465.5px;top:70px;width:40px;text-align:right">max</div><div class="lh" style="left:1515px;top:70px">current</div>
<div class="lr" style="left:1297.5px;top:86.7px;width:260px;height:23.33px;"><i style="background:#7EB26D"></i><span class="ln" style="letter-spacing:-0.051px;">max-gc</span><span class="lv" style="right:44.4px">16.4 s</span><span class="lv" style="right:-12.5px">16.4 s</span></div><div class="lr" style="left:1297.5px;top:110.0px;width:260px;height:23.33px;background:#1b1d21;"><i style="background:#EF843C"></i><span class="ln" style="letter-spacing:-0.300px;">99%-gc</span><span class="lv" style="right:44.4px">12.8 s</span><span class="lv" style="right:-12.5px">7.8 s</span></div><div class="lr" style="left:1297.5px;top:133.4px;width:260px;height:23.33px;"><i style="background:#BA43A9"></i><span class="ln" style="letter-spacing:-0.300px;">95%-gc</span><span class="lv" style="right:44.4px">7.5 s</span><span class="lv" style="right:-12.5px">6.2 s</span></div><div class="lr" style="left:1297.5px;top:156.7px;width:260px;height:23.33px;background:#1b1d21;"><i style="background:#CCA300"></i><span class="ln" style="letter-spacing:-0.183px;">average-gc</span><span class="lv" style="right:44.4px">3.3 s</span><span class="lv" style="right:-12.5px">2.8 s</span></div><div class="lr" style="left:1297.5px;top:180.0px;width:260px;height:23.33px;"><i style="background:#C15C17"></i><span class="ln" style="letter-spacing:-0.159px;">average-unsafe_destroy_range</span><span class="lv" style="right:44.4px">0 s</span><span class="lv" style="right:-12.5px">0 s</span></div><div class="lr" style="left:1297.5px;top:203.3px;width:260px;height:23.33px;background:#1b1d21;"><i style="background:#447EBC"></i><span class="ln" style="letter-spacing:-0.216px;">average-gc_keys</span><span class="lv" style="right:44.4px">0 s</span><span class="lv" style="right:-12.5px">0 s</span></div><div class="lr" style="left:1297.5px;top:226.7px;width:260px;height:23.33px;"><i style="background:#508642"></i><span class="ln" style="letter-spacing:-0.215px;">95%-unsafe_destroy_range</span><span class="lv" style="right:44.4px">0 s</span><span class="lv" style="right:-12.5px">0 s</span></div>
<div class="lh" style="left:661px;top:309px;width:40px;text-align:right">max</div><div class="lh" style="left:710px;top:309px">current<svg width="8" height="6" viewBox="0 0 8 6" style="margin-left:4px;vertical-align:1px"><path d="M1 1.2 L4 4.2 L7 1.2" fill="none" stroke="#33a2e5" stroke-width="1.4"/></svg></div>
<div class="lr" style="left:549px;top:326.1px;width:218px;height:23.33px;"><i style="background:#7EB26D"></i><span class="ln" style="letter-spacing:0.023px;">10.11.0.5:10080</span><span class="lv" style="right:58.5px">4.27 min</span><span class="lv" style="right:1.0px">8 s</span></div>
<div class="lh" style="left:1466px;top:309px;width:40px;text-align:right">max</div><div class="lh" style="left:1515px;top:309px">current</div>
<div class="lr" style="left:1364.5px;top:326.1px;width:200px;height:23.33px;"><i style="background:#7EB26D"></i><span class="ln" style="letter-spacing:-0.111px;">check_leader</span><span class="lv" style="right:51.4px">0.09</span><span class="lv" style="right:-5.5px">0.07</span></div><div class="lr" style="left:1364.5px;top:349.4px;width:200px;height:23.33px;background:#1b1d21;"><i style="background:#1F78C1"></i><span class="ln" style="letter-spacing:-0.147px;">run_job</span><span class="lv" style="right:51.4px">0.02</span><span class="lv" style="right:-5.5px">0</span></div><div class="lr" style="left:1364.5px;top:372.8px;width:200px;height:23.33px;"><i style="background:#E24D42"></i><span class="ln" style="letter-spacing:-0.086px;">resolve_locks</span><span class="lv" style="right:51.4px">0.02</span><span class="lv" style="right:-5.5px">0</span></div><div class="lr" style="left:1364.5px;top:396.1px;width:200px;height:23.33px;background:#1b1d21;"><i style="background:#EF843C"></i><span class="ln" style="letter-spacing:-0.102px;">register_leader</span><span class="lv" style="right:51.4px">0</span><span class="lv" style="right:-5.5px">0</span></div><div class="lr" style="left:1364.5px;top:419.4px;width:200px;height:23.33px;"><i style="background:#6ED0E0"></i><span class="ln" style="letter-spacing:-0.197px;">redo_delete_range</span><span class="lv" style="right:51.4px">0.02</span><span class="lv" style="right:-5.5px">0</span></div><div class="lr" style="left:1364.5px;top:442.8px;width:200px;height:23.33px;background:#1b1d21;"><i style="background:#EAB839"></i><span class="ln" style="letter-spacing:-0.179px;">delete_range</span><span class="lv" style="right:51.4px">0.02</span><span class="lv" style="right:-5.5px">0.02</span></div>
<svg style="position:absolute;left:772.3px;top:494.3px" width="6" height="6" viewBox="0 0 6 6"><path d="M5 1.2V5H1.2" fill="none" stroke="#7b8087" stroke-width="1.3"/></svg>
</div></body></html>
